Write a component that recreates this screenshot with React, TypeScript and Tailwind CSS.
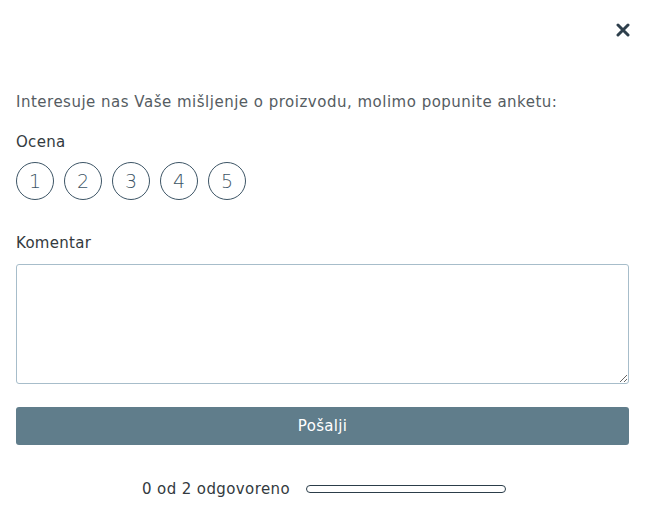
import React from "react";

export default function App() {
  return (
    <div className="w-[646px] h-[519px] bg-white relative" style={{ fontFamily: '"DejaVu Sans", sans-serif' }}>
      <div className="flex justify-end pt-[23px] pr-[16px] h-[50px]">
        <svg width="14" height="14" viewBox="0 0 14 14">
          <path d="M2 2 L12 12 M12 2 L2 12" stroke="#2e3f4c" strokeWidth="3" strokeLinecap="round" />
        </svg>
      </div>
      <div className="px-[16px] pt-[42px]">
        <p className="text-[15px] tracking-[0.5px] text-[#555c62] leading-[20px]">Interesuje nas Vaše mišljenje o proizvodu, molimo popunite anketu:</p>
        <p className="mt-[20px] text-[15px] tracking-[0.3px] text-[#333a40] leading-[20px]">Ocena</p>
        <div className="flex gap-[10px] mt-[10px]">
          {[1, 2, 3, 4, 5].map((n) => (
            <div key={n} className="w-[38px] h-[38px] rounded-full border border-[#3d5566] flex items-center justify-center text-[19px] font-light text-[#3d5566]">
              {n}
            </div>
          ))}
        </div>
        <p className="mt-[33px] text-[15px] tracking-[0.3px] text-[#333a40] leading-[20px]">Komentar</p>
        <textarea className="block mt-[11px] w-[613px] h-[120px] border border-[#a7bdca] rounded-[3px]" />
        <button className="mt-[23px] w-[613px] h-[38px] bg-[#607d8b] rounded-[3px] text-white text-[15px] tracking-[0.3px]">Pošalji</button>
        <div className="flex items-center justify-center gap-[16px] mt-[33px] pl-[2px]">
          <span className="text-[15px] tracking-[0.4px] text-[#333a40]">0 od 2 odgovoreno</span>
          <div className="w-[200px] h-[8px] rounded-full border-[1.5px] border-[#2c3e4a]" />
        </div>
      </div>
    </div>
  );
}
